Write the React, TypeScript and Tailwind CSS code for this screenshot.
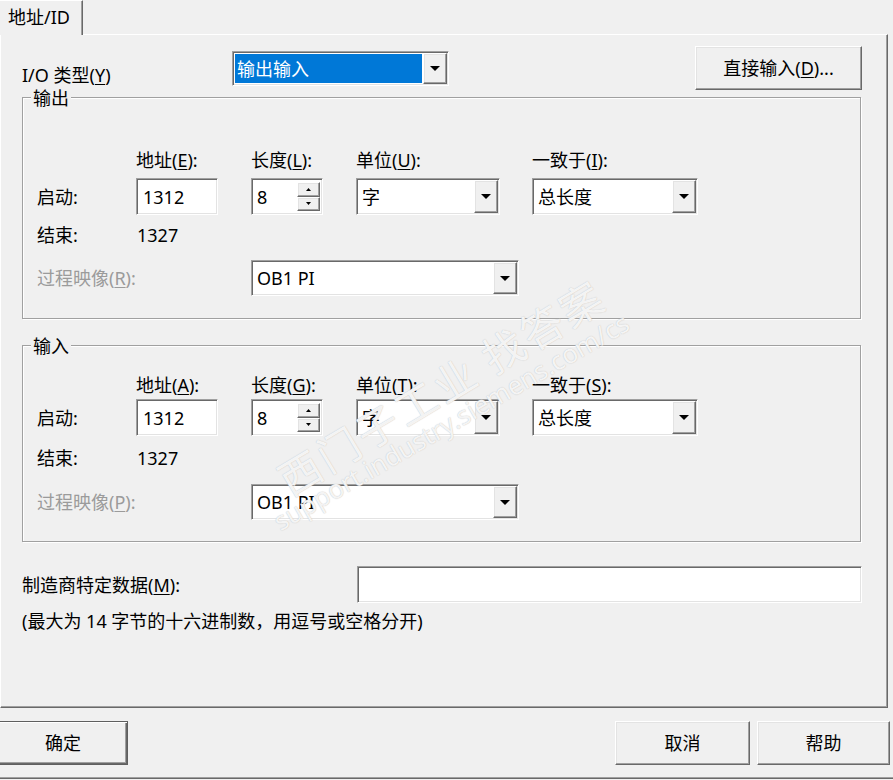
import React from 'react';

const sunken =
  'bg-white border border-t-[#a0a0a0] border-l-[#a0a0a0] border-r-white border-b-white shadow-[inset_1px_1px_0_#696969,inset_-1px_-1px_0_#e3e3e3]';
const raised =
  'bg-[#f0f0f0] border border-t-white border-l-white border-r-[#696969] border-b-[#696969] shadow-[inset_-1px_-1px_0_#a0a0a0,inset_1px_1px_0_#e3e3e3]';

function Mn({ children }: { children: React.ReactNode }) {
  return <span className="underline underline-offset-[2px] decoration-1">{children}</span>;
}

function ArrowBtn() {
  return (
    <div className={`${raised} w-[24px] shrink-0 flex items-center justify-center`}>
      <svg width="10" height="5" viewBox="0 0 10 5">
        <path d="M0 0H10L5 5Z" fill="#000" />
      </svg>
    </div>
  );
}

function Combo({
  value,
  className,
  selected = false,
}: {
  value: string;
  className: string;
  selected?: boolean;
}) {
  return (
    <div className={`${sunken} flex p-px ${className}`}>
      <div
        className={`flex-1 flex items-center ${
          selected ? 'bg-[#0078d7] text-white ml-px my-px mr-px pl-[2px]' : 'pl-[4px]'
        }`}
      >
        {value}
      </div>
      <ArrowBtn />
    </div>
  );
}

function TextBox({ value, className }: { value?: string; className: string }) {
  return (
    <div className={`${sunken} flex items-center pl-[6px] ${className}`}>{value}</div>
  );
}

function Spin({ value }: { value: string }) {
  return (
    <div className={`${sunken} flex p-px w-[72px] h-[37px]`}>
      <div className="flex-1 flex items-center pl-[4px]">{value}</div>
      <div className="flex flex-col w-[23px] my-[2px] mr-px">
        <div className={`${raised} flex-1 flex items-center justify-center`}>
          <svg width="5" height="3" viewBox="0 0 5 3">
            <path d="M2.5 0L5 3H0Z" fill="#000" />
          </svg>
        </div>
        <div className={`${raised} flex-1 flex items-center justify-center`}>
          <svg width="5" height="3" viewBox="0 0 5 3">
            <path d="M0 0H5L2.5 3Z" fill="#000" />
          </svg>
        </div>
      </div>
    </div>
  );
}

function Button({
  children,
  className,
  isDefault = false,
}: {
  children: React.ReactNode;
  className: string;
  isDefault?: boolean;
}) {
  const frame = isDefault
    ? 'bg-[#f0f0f0] border border-[#5f5f5f] shadow-[inset_1px_1px_0_#fff,inset_-1px_-1px_0_#696969,inset_-2px_-2px_0_#a0a0a0]'
    : raised;
  return (
    <div className={`${frame} flex items-center justify-center ${className}`}>{children}</div>
  );
}

interface IoGroupProps {
  title: string;
  keys: [string, string, string, string, string];
  className: string;
  pads: [string, string, string, string];
}

function IoGroup({ title, keys, className, pads }: IoGroupProps) {
  const [addr, len, unit, cons, image] = keys;
  return (
    <div
      className={`relative ml-[21px] w-[839px] border border-[#a0a0a0] shadow-[inset_1px_1px_0_#fff,1px_1px_0_#fff] ${className}`}
    >
      <span className="absolute left-[8px] -top-[11px] px-[2px] bg-[#f0f0f0]">{title}</span>
      <div className={`pl-[14px] ${pads[0]}`}>
        <div className="flex h-[22px]">
          <div className="w-[99px]" />
          <div className="w-[115px]">
            地址(<Mn>{addr}</Mn>):
          </div>
          <div className="w-[105px]">
            长度(<Mn>{len}</Mn>):
          </div>
          <div className="w-[176px]">
            单位(<Mn>{unit}</Mn>):
          </div>
          <div>
            一致于(<Mn>{cons}</Mn>):
          </div>
        </div>

        <div className={`flex items-center ${pads[1]}`}>
          <div className="w-[99px]">启动:</div>
          <div className="w-[115px]">
            <TextBox value="1312" className="w-[82px] h-[37px]" />
          </div>
          <div className="w-[105px]">
            <Spin value="8" />
          </div>
          <div className="w-[176px]">
            <Combo value="字" className="w-[144px] h-[37px]" />
          </div>
          <Combo value="总长度" className="w-[166px] h-[37px]" />
        </div>

        <div className={`flex h-[22px] ${pads[2]}`}>
          <div className="w-[99px]">结束:</div>
          <div className="pl-px">1327</div>
        </div>

        <div className={`flex items-center ${pads[3]}`}>
          <div className="w-[214px] text-[#9b9b9b]">
            过程映像(<Mn>{image}</Mn>):
          </div>
          <Combo value="OB1 PI" className="w-[268px] h-[36px]" />
        </div>
      </div>
    </div>
  );
}

export default function App() {
  return (
    <div className="relative w-[893px] h-[780px] overflow-hidden bg-[#f0f0f0] text-black text-[18px] leading-[22px] font-['Noto_Sans','Noto_Sans_CJK_SC',sans-serif]">
      {/* Tab strip */}
      <div className="h-[34px] flex">
        <div className="relative z-10 h-[35px] w-[83px] bg-[#f0f0f0] border-t border-white border-r border-r-[#696969] shadow-[inset_-1px_0_0_#a0a0a0] pl-[8px] pt-[5px]">
          地址/ID
        </div>
      </div>

      {/* Tab panel */}
      <div className="w-[888px] h-[674px] border-t border-l border-white border-r border-b border-r-[#696969] border-b-[#696969] shadow-[inset_-1px_-1px_0_#a0a0a0]">
        <div className="flex items-start h-[62px]">
          <div className="w-[231px] pl-[21px] mt-[29px]">
            I/O 类型(<Mn>Y</Mn>)
          </div>
          <Combo value="输出输入" selected className="mt-[16px] w-[217px] h-[35px]" />
          <Button className="ml-[246px] mt-[11px] w-[167px] h-[44px]">
            直接输入(<Mn>D</Mn>)...
          </Button>
        </div>

        <IoGroup
          title="输出"
          keys={['E', 'L', 'U', 'I', 'R']}
          className="h-[222px]"
          pads={['pt-[51px]', 'mt-[7px]', 'mt-[9px]', 'mt-[14px]']}
        />

        <IoGroup
          title="输入"
          keys={['A', 'G', 'T', 'S', 'P']}
          className="mt-[26px] h-[197px]"
          pads={['pt-[28px]', 'mt-[3px]', 'mt-[11px]', 'mt-[15px]']}
        />

        <div className="mt-[24px] flex items-center">
          <div className="w-[356px] pl-[21px]">
            制造商特定数据(<Mn>M</Mn>):
          </div>
          <TextBox className="w-[505px] h-[37px]" />
        </div>
        <div className="mt-[7px] pl-[21px]">(最大为 14 字节的十六进制数，用逗号或空格分开)</div>
      </div>

      {/* Dialog buttons */}
      <div className="mt-[13px] flex">
        <Button isDefault className="-ml-[2px] w-[130px] h-[44px]">
          确定
        </Button>
        <Button className="ml-[487px] w-[135px] h-[44px]">取消</Button>
        <Button className="ml-[7px] w-[133px] h-[44px]">帮助</Button>
      </div>
      <div className="mt-[12px] h-[2px] border-t border-[#a0a0a0] border-b border-b-[#696969]" />

      {/* Watermark */}
      <div className="pointer-events-none absolute inset-0 font-['Noto_Sans_CJK_SC',sans-serif]">
        <span className="absolute left-[292px] top-[458px] origin-bottom-left -rotate-[31deg] whitespace-nowrap text-[42px] leading-[42px] tracking-[3px] text-white/85 [text-shadow:0_0_1px_#b0b0b0]">
          西门子工业 找答案
        </span>
        <span className="absolute left-[282px] top-[508px] origin-bottom-left -rotate-[30deg] whitespace-nowrap text-[26px] leading-[26px] text-white/85 font-['Noto_Sans',sans-serif] [text-shadow:0_0_1px_#b0b0b0]">
          support.industry.siemens.com/cs
        </span>
      </div>
    </div>
  );
}
